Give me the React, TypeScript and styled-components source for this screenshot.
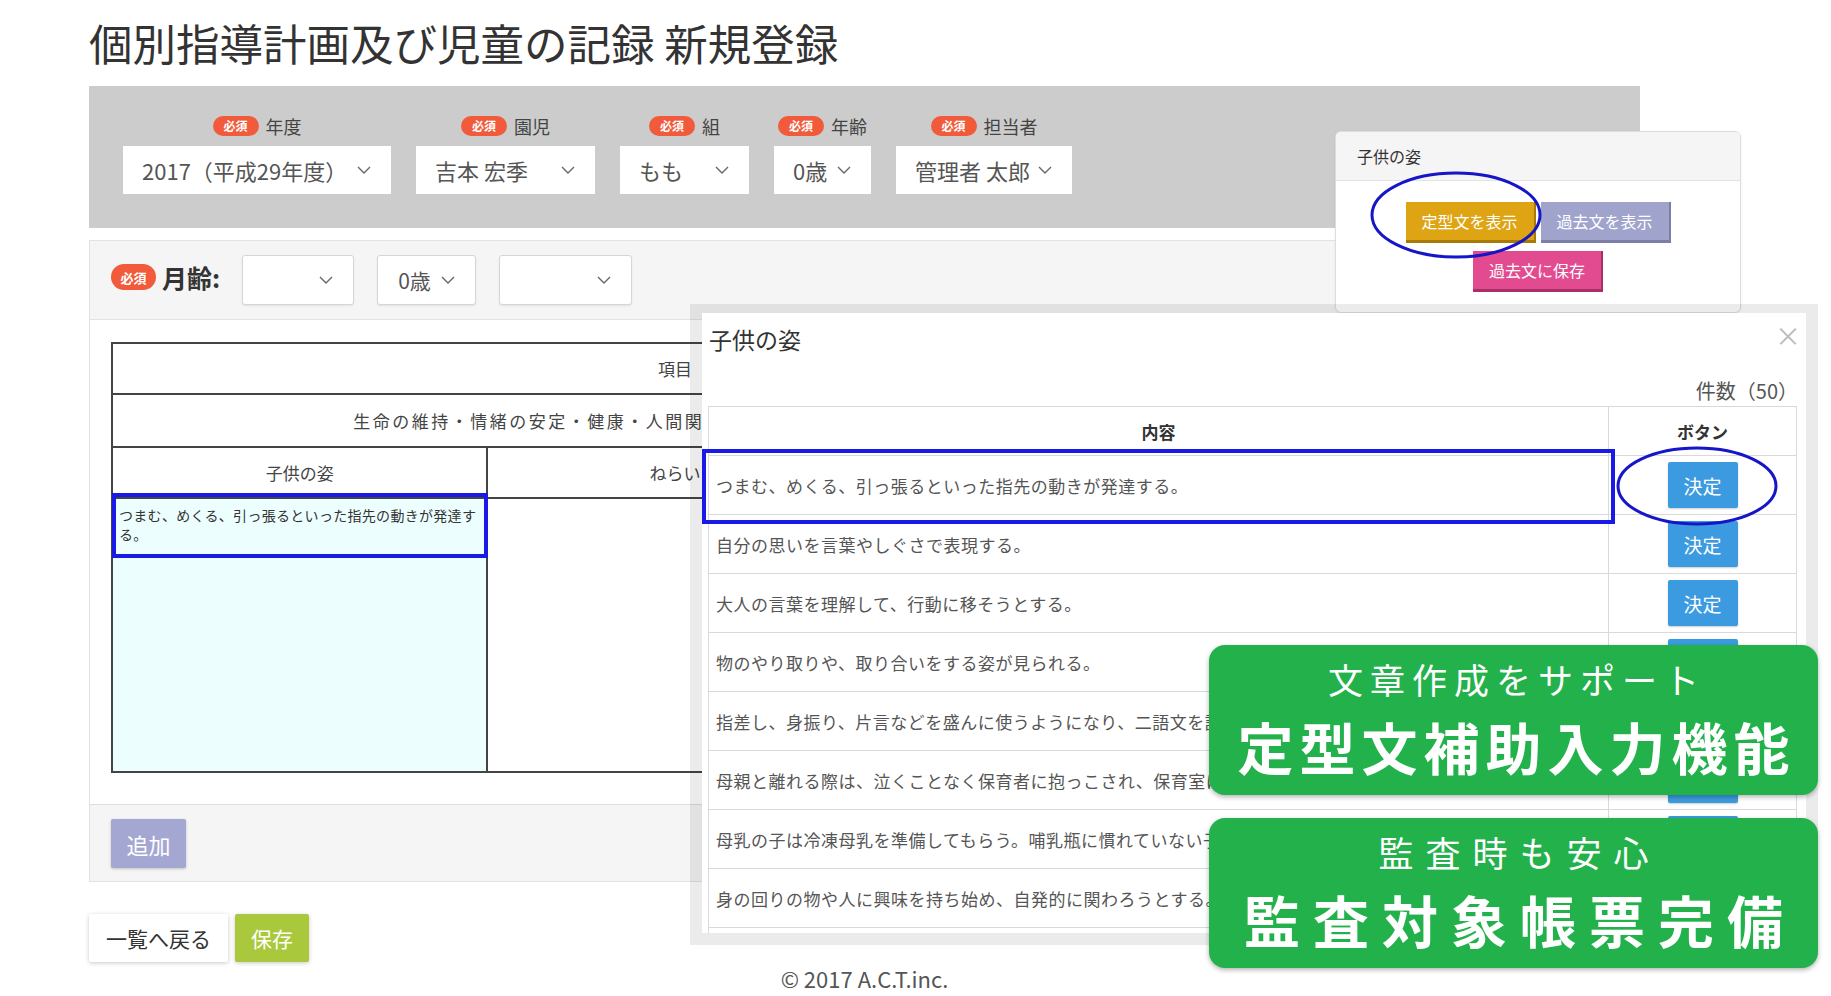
import React from 'react';
import styled, { createGlobalStyle } from 'styled-components';

const GlobalStyle = createGlobalStyle`
  html, body {
    margin: 0;
    padding: 0;
    background: #ffffff;
  }
  body {
    font-family: "Noto Sans CJK JP", "Noto Sans", sans-serif;
    color: #333333;
  }
  * {
    box-sizing: border-box;
  }
`;

const Page = styled.div`
  position: relative;
  width: 1831px;
  height: 996px;
  overflow: hidden;
`;

const Main = styled.div`
  width: 1640px;
  padding-left: 89px;
`;

const Title = styled.h1`
  margin: 0;
  height: 86px;
  line-height: 86px;
  font-size: 43.5px;
  font-weight: 400;
  color: #333333;
  white-space: nowrap;
`;

const TopPanel = styled.div`
  display: flex;
  gap: 25px;
  height: 142px;
  padding: 30px 0 0 34px;
  background: #cccccc;
`;

const Field = styled.div`
  display: flex;
  flex-direction: column;
  align-items: center;
  gap: 10px;
`;

const LabelRow = styled.div`
  display: flex;
  align-items: center;
  gap: 7px;
  height: 20px;
`;

const Badge = styled.span<{ $big?: boolean }>`
  display: inline-flex;
  align-items: center;
  justify-content: center;
  width: ${(p) => (p.$big ? 45 : 46)}px;
  height: ${(p) => (p.$big ? 26 : 20)}px;
  border-radius: 13px;
  background: #f15b3b;
  color: #ffffff;
  font-size: ${(p) => (p.$big ? 13 : 12)}px;
  font-weight: 700;
  line-height: 1;
`;

const LabelText = styled.span`
  font-size: 18px;
  line-height: 20px;
  color: #444444;
`;

const SelectBox = styled.div<{ $w: number; $h?: number; $outlined?: boolean }>`
  display: flex;
  align-items: center;
  justify-content: space-between;
  width: ${(p) => p.$w}px;
  height: ${(p) => p.$h ?? 48}px;
  padding: 0 20px 0 ${(p) => (p.$outlined ? 20 : 19)}px;
  background: #ffffff;
  border: ${(p) => (p.$outlined ? '1px solid #d6d6d6' : 'none')};
  border-radius: ${(p) => (p.$outlined ? 3 : 0)}px;
  box-shadow: ${(p) => (p.$outlined ? '0 1px 2px rgba(0,0,0,0.08)' : 'none')};
  font-size: ${(p) => (p.$outlined ? 21 : 22)}px;
  color: #555555;
  white-space: nowrap;
`;

const MonthPanel = styled.div`
  display: flex;
  align-items: center;
  height: 80px;
  margin-top: 12px;
  padding-left: 21px;
  background: #f5f5f5;
  border: 1px solid #e2e2e2;
`;

const MonthTitle = styled.div`
  display: flex;
  align-items: center;
  margin-bottom: 6px;
`;

const MonthLabel = styled.span`
  margin: 0 22px 0 6px;
  font-size: 25px;
  font-weight: 700;
  color: #333333;
`;

const MonthSelects = styled.div`
  display: flex;
  gap: 23px;
`;

const Card = styled.div`
  border: 1px solid #e2e2e2;
  border-top: none;
`;

const CardBody = styled.div`
  padding: 22px 0 31px 21px;
  background: #ffffff;
`;

const PlanTable = styled.table`
  width: 1128px;
  border-collapse: collapse;
  table-layout: fixed;
  font-size: 17px;
  color: #444444;
`;

const PlanCell = styled.td<{ $h: number; $tint?: boolean; $wide?: boolean }>`
  height: ${(p) => p.$h}px;
  border: 2px solid #444444;
  text-align: center;
  vertical-align: middle;
  background: ${(p) => (p.$tint ? '#edfeff' : '#ffffff')};
  letter-spacing: ${(p) => (p.$wide ? 2.5 : 0)}px;
  white-space: nowrap;
  overflow: hidden;
`;

const NoteCell = styled(PlanCell)`
  vertical-align: top;
  text-align: left;
  white-space: normal;
  padding: 7px 6px;
  font-size: 14px;
  letter-spacing: 0.3px;
  line-height: 19px;
  color: #333333;
`;

const FormFooter = styled.div`
  display: flex;
  align-items: flex-start;
  height: 77px;
  padding: 14px 0 0 21px;
  background: #f5f5f5;
  border-top: 1px solid #dddddd;
`;

const AddButton = styled.button`
  width: 75px;
  height: 49px;
  border: none;
  border-radius: 2px;
  background: #a5a7d3;
  color: #ffffff;
  font-family: inherit;
  font-size: 22px;
  box-shadow: 0 1px 3px rgba(0, 0, 0, 0.22);
`;

const ActionRow = styled.div`
  display: flex;
  gap: 7px;
  margin-top: 32px;
`;

const ActionButton = styled.button<{ $primary?: boolean }>`
  height: 48px;
  padding: 0 ${(p) => (p.$primary ? 16 : 17)}px;
  border: none;
  border-radius: 2px;
  background: ${(p) => (p.$primary ? '#a9c83b' : '#ffffff')};
  color: ${(p) => (p.$primary ? '#ffffff' : '#333333')};
  font-family: inherit;
  font-size: 21px;
  box-shadow: 0 1px 4px rgba(0, 0, 0, 0.22);
`;

const Copyright = styled.div`
  margin-top: 3px;
  width: 1551px;
  line-height: 26px;
  text-align: center;
  font-size: 22px;
  color: #555555;
`;

/* floating panel on the right */
const SideCard = styled.div`
  position: absolute;
  left: 1335px;
  top: 131px;
  width: 406px;
  height: 182px;
  background: #ffffff;
  border: 1px solid #dddddd;
  border-radius: 6px;
  box-shadow: 0 1px 3px rgba(0, 0, 0, 0.06);
  overflow: hidden;
`;

const SideCardHeader = styled.div`
  height: 49px;
  padding-left: 21px;
  display: flex;
  align-items: center;
  background: #f5f5f5;
  border-bottom: 1px solid #e3e3e3;
  font-size: 16px;
  color: #333333;
`;

const SideCardBody = styled.div`
  display: flex;
  flex-wrap: wrap;
  justify-content: center;
  gap: 8px 5px;
  padding: 21px 40px 0;
`;

const tones = {
  orange: ['#dea414', '#a87a08'],
  lavender: ['#a0a4cd', '#7b7fa8'],
  pink: ['#e34b91', '#a92f68'],
};

const ToneButton = styled.button<{ $tone: keyof typeof tones }>`
  width: 130px;
  height: 41px;
  border: none;
  border-right: 2px solid ${(p) => tones[p.$tone][1]};
  border-bottom: 3px solid ${(p) => tones[p.$tone][1]};
  background: ${(p) => tones[p.$tone][0]};
  color: #ffffff;
  font-family: inherit;
  font-size: 16px;
`;

/* phrase picker dialog */
const Modal = styled.div`
  position: absolute;
  left: 690px;
  top: 304px;
  width: 1128px;
  height: 641px;
  border: 12px solid rgba(0, 0, 0, 0.08);
  border-top-width: 9px;
  background: #ffffff;
  background-clip: padding-box;
`;

const ModalInner = styled.div`
  height: 100%;
  padding: 0 10px 0 6px;
  overflow: hidden;
`;

const ModalHeader = styled.div`
  display: flex;
  align-items: center;
  justify-content: space-between;
  height: 52px;
`;

const ModalTitle = styled.div`
  padding-left: 1px;
  font-size: 23px;
  color: #333333;
`;

const CloseMark = styled.span`
  margin: -8px -5px 0 0;
  font-size: 26px;
  line-height: 1;
  color: #bbbbbb;
`;

const CountRow = styled.div`
  display: flex;
  justify-content: flex-end;
  align-items: center;
  height: 41px;
  padding-top: 10px;
  margin-right: -2px;
  font-size: 20px;
  color: #555555;
`;

const PhraseTable = styled.table`
  width: 1088px;
  border-collapse: collapse;
  table-layout: fixed;
`;

const PhraseHead = styled.th`
  height: 49px;
  border: 1px solid #d9d9d9;
  font-size: 17px;
  font-weight: 700;
  color: #333333;
  text-align: center;
`;

const PhraseCell = styled.td`
  height: 59px;
  padding-left: 7px;
  border: 1px solid #d9d9d9;
  font-size: 17px;
  letter-spacing: 0.5px;
  color: #555555;
  white-space: nowrap;
  overflow: hidden;
`;

const ButtonCell = styled.td`
  height: 59px;
  border: 1px solid #d9d9d9;
  text-align: center;
`;

const PickButton = styled.button`
  width: 70px;
  height: 46px;
  border: none;
  border-radius: 2px;
  background: #3c9be0;
  color: #ffffff;
  font-family: inherit;
  font-size: 19px;
  box-shadow: 0 1px 2px rgba(0, 0, 0, 0.2);
`;

/* green promo callouts */
const Callout = styled.div<{ $top: number }>`
  position: absolute;
  left: 1209px;
  top: ${(p) => p.$top}px;
  width: 609px;
  height: 150px;
  display: flex;
  flex-direction: column;
  align-items: center;
  padding-top: 14px;
  border-radius: 16px;
  background: #23b14b;
  box-shadow: 0 2px 5px rgba(0, 0, 0, 0.3);
  color: #ffffff;
`;

const CalloutLead = styled.div<{ $spacing: number }>`
  font-size: 35px;
  line-height: 40px;
  letter-spacing: ${(p) => p.$spacing}px;
  padding-left: ${(p) => p.$spacing}px;
  white-space: nowrap;
`;

const CalloutMain = styled.div<{ $spacing: number }>`
  margin-top: 15px;
  font-size: 56px;
  font-weight: 700;
  line-height: 64px;
  letter-spacing: ${(p) => p.$spacing}px;
  padding-left: ${(p) => p.$spacing}px;
  white-space: nowrap;
`;

const Marks = styled.svg`
  position: absolute;
  left: 0;
  top: 0;
  pointer-events: none;
`;

const Chevron = () => (
  <svg width="14" height="8" viewBox="0 0 14 8" fill="none">
    <polyline points="1,1 7,7 13,1" stroke="#666" strokeWidth="1.4" />
  </svg>
);

const topFields = [
  { label: '年度', value: '2017（平成29年度）', w: 268 },
  { label: '園児', value: '吉本 宏季', w: 179 },
  { label: '組', value: 'もも', w: 129 },
  { label: '年齢', value: '0歳', w: 97 },
  { label: '担当者', value: '管理者 太郎', w: 176 },
];

const monthSelects = [
  { value: '', w: 112 },
  { value: '0歳', w: 99 },
  { value: '', w: 133 },
];

const phrases = [
  'つまむ、めくる、引っ張るといった指先の動きが発達する。',
  '自分の思いを言葉やしぐさで表現する。',
  '大人の言葉を理解して、行動に移そうとする。',
  '物のやり取りや、取り合いをする姿が見られる。',
  '指差し、身振り、片言などを盛んに使うようになり、二語文を話し始める。',
  '母親と離れる際は、泣くことなく保育者に抱っこされ、保育室に入る。',
  '母乳の子は冷凍母乳を準備してもらう。哺乳瓶に慣れていない子もいる。',
  '身の回りの物や人に興味を持ち始め、自発的に関わろうとする。',
  '保育者に見守られながら、安心して好きな遊びを楽しむ。',
  '友達のしていることに興味を持ち、真似をしようとする。',
];

const App: React.FC = () => {
  return (
    <Page>
      <GlobalStyle />
      <Main>
        <Title>個別指導計画及び児童の記録 新規登録</Title>

        <TopPanel>
          {topFields.map((f) => (
            <Field key={f.label}>
              <LabelRow>
                <Badge>必須</Badge>
                <LabelText>{f.label}</LabelText>
              </LabelRow>
              <SelectBox $w={f.w}>
                <span>{f.value}</span>
                <Chevron />
              </SelectBox>
            </Field>
          ))}
        </TopPanel>

        <MonthPanel>
          <MonthTitle>
            <Badge $big>必須</Badge>
            <MonthLabel>月齢:</MonthLabel>
          </MonthTitle>
          <MonthSelects>
            {monthSelects.map((s, i) => (
              <SelectBox key={i} $w={s.w} $h={50} $outlined>
                <span>{s.value}</span>
                <Chevron />
              </SelectBox>
            ))}
          </MonthSelects>
        </MonthPanel>

        <Card>
          <CardBody>
            <PlanTable>
              <tbody>
                <tr>
                  <PlanCell $h={51} colSpan={3}>
                    項目
                  </PlanCell>
                </tr>
                <tr>
                  <PlanCell $h={53} colSpan={3} $wide>
                    生命の維持・情緒の安定・健康・人間関係・環境・言葉・表現・食育・他
                  </PlanCell>
                </tr>
                <tr>
                  <PlanCell $h={51}>子供の姿</PlanCell>
                  <PlanCell $h={51}>ねらい</PlanCell>
                  <PlanCell $h={51}>保育者の援助・環境構成</PlanCell>
                </tr>
                <tr>
                  <NoteCell $h={274} $tint>
                    つまむ、めくる、引っ張るといった指先の動きが発達する。
                  </NoteCell>
                  <NoteCell $h={274} />
                  <NoteCell $h={274} />
                </tr>
              </tbody>
            </PlanTable>
          </CardBody>
          <FormFooter>
            <AddButton>追加</AddButton>
          </FormFooter>
        </Card>

        <ActionRow>
          <ActionButton>一覧へ戻る</ActionButton>
          <ActionButton $primary>保存</ActionButton>
        </ActionRow>

        <Copyright>© 2017 A.C.T.inc.</Copyright>
      </Main>

      <SideCard>
        <SideCardHeader>子供の姿</SideCardHeader>
        <SideCardBody>
          <ToneButton $tone="orange">定型文を表示</ToneButton>
          <ToneButton $tone="lavender">過去文を表示</ToneButton>
          <ToneButton $tone="pink">過去文に保存</ToneButton>
        </SideCardBody>
      </SideCard>

      <Modal>
        <ModalInner>
          <ModalHeader>
            <ModalTitle>子供の姿</ModalTitle>
            <CloseMark>×</CloseMark>
          </ModalHeader>
          <CountRow>件数（50）</CountRow>
          <PhraseTable>
            <colgroup>
              <col style={{ width: 900 }} />
              <col style={{ width: 188 }} />
            </colgroup>
            <thead>
              <tr>
                <PhraseHead>内容</PhraseHead>
                <PhraseHead>ボタン</PhraseHead>
              </tr>
            </thead>
            <tbody>
              {phrases.map((p) => (
                <tr key={p}>
                  <PhraseCell>{p}</PhraseCell>
                  <ButtonCell>
                    <PickButton>決定</PickButton>
                  </ButtonCell>
                </tr>
              ))}
            </tbody>
          </PhraseTable>
        </ModalInner>
      </Modal>

      <Marks width="1831" height="996" viewBox="0 0 1831 996">
        <rect x="114" y="495" width="372" height="61" fill="none" stroke="#1a1ae6" strokeWidth="4" />
        <rect x="704" y="451" width="909" height="71" fill="none" stroke="#1a1ae6" strokeWidth="4" />
        <ellipse cx="1456" cy="215" rx="84" ry="42" fill="none" stroke="#1616c8" strokeWidth="3" />
        <ellipse cx="1697" cy="486" rx="79" ry="38" fill="none" stroke="#1616c8" strokeWidth="3" />
      </Marks>

      <Callout $top={645}>
        <CalloutLead $spacing={7}>文章作成をサポート</CalloutLead>
        <CalloutMain $spacing={6}>定型文補助入力機能</CalloutMain>
      </Callout>
      <Callout $top={818}>
        <CalloutLead $spacing={12}>監査時も安心</CalloutLead>
        <CalloutMain $spacing={13}>監査対象帳票完備</CalloutMain>
      </Callout>
    </Page>
  );
};

export default App;
